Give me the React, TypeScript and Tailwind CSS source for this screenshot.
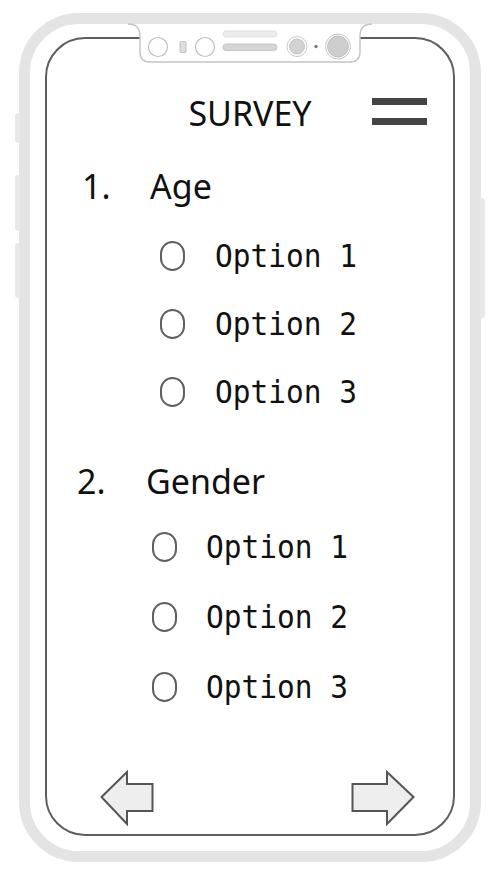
import React from 'react';

const ageOptions = ['Option 1', 'Option 2', 'Option 3'];
const genderOptions = ['Option 1', 'Option 2', 'Option 3'];

function Radio() {
  return <span className="block w-[25px] h-[30px] rounded-full border-2 border-[#606060] bg-white shrink-0" />;
}

function Notch() {
  return (
    <svg className="absolute left-[125px] top-[13px]" width="250" height="55" viewBox="0 0 250 55">
      <path
        d="M3 11 C11 11 15 15 15 23 L15 39 Q15 49 25 49 L225 49 Q235 49 235 39 L235 23 C235 15 239 11 247 11"
        fill="#fff"
        stroke="#c4c4c4"
        strokeWidth="1.4"
      />
      <rect x="98" y="18" width="54" height="6" rx="3" fill="#ececec" stroke="#dcdcdc" strokeWidth="0.8" />
      <circle cx="33" cy="34" r="9.5" fill="#fff" stroke="#c0c0c0" strokeWidth="1.2" />
      <rect x="55" y="28.5" width="6" height="11" rx="1" fill="#dedede" stroke="#b5b5b5" strokeWidth="0.8" />
      <circle cx="80" cy="34" r="9.5" fill="#fff" stroke="#c0c0c0" strokeWidth="1.2" />
      <rect x="98" y="31" width="54" height="6.5" rx="3.2" fill="#d6d6d6" stroke="#bdbdbd" strokeWidth="0.8" />
      <circle cx="172" cy="33.5" r="10" fill="#fff" stroke="#c9c9c9" strokeWidth="1" />
      <circle cx="172" cy="33.5" r="7.5" fill="#d2d2d2" stroke="#b8b8b8" strokeWidth="0.8" />
      <circle cx="191" cy="33.5" r="1.7" fill="#7a7a7a" />
      <circle cx="213" cy="33.5" r="12.5" fill="#fff" stroke="#c4c4c4" strokeWidth="1" />
      <circle cx="213" cy="33.5" r="10.5" fill="#cdcdcd" stroke="#b5b5b5" strokeWidth="0.8" />
    </svg>
  );
}

export default function App() {
  return (
    <div className="relative w-[500px] h-[878px] bg-white overflow-hidden text-[#111]">
      {/* side buttons */}
      <span className="absolute left-[15px] top-[113px] w-[5px] h-[30px] rounded-l-[3px] bg-[#e8e8e8]" />
      <span className="absolute left-[15px] top-[175px] w-[5px] h-[56px] rounded-l-[3px] bg-[#e8e8e8]" />
      <span className="absolute left-[15px] top-[243px] w-[5px] h-[55px] rounded-l-[3px] bg-[#e8e8e8]" />
      <span className="absolute left-[480px] top-[198px] w-[5px] h-[120px] rounded-r-[3px] bg-[#e8e8e8]" />

      {/* phone body */}
      <div className="ml-[19px] mt-[13px] w-[462px] h-[849px] rounded-[60px] border-[11px] border-[#e4e4e4] px-[15px] pt-[13px] pb-[15px]">
        {/* screen */}
        <div className="flex flex-col h-full rounded-[40px] border-2 border-[#5e5e5e]">
          <header className="mt-[54px] h-[40px] grid grid-cols-[1fr_auto_1fr] items-center">
            <span />
            <h1 className="text-[34px] leading-[40px] font-['Noto_Sans',sans-serif]">SURVEY</h1>
            <div className="justify-self-end mr-[26px] mb-[4px] flex flex-col gap-[13px]">
              <span className="block w-[55px] h-[7px] bg-[#444]" />
              <span className="block w-[55px] h-[7px] bg-[#444]" />
            </div>
          </header>

          {/* question 1 */}
          <section className="mt-[33px]">
            <div className="flex items-center h-[40px] ml-[35px] text-[34px] leading-[40px] font-['Noto_Sans',sans-serif]">
              <span className="w-[68px]">1.</span>
              <span>Age</span>
            </div>
            <ul className="mt-[16px]">
              {ageOptions.map((o) => (
                <li key={o} className="flex items-center h-[68px] ml-[113px] gap-[30px]">
                  <Radio />
                  <span className="inline-block scale-y-[1.1] text-[29.5px] font-['DejaVu_Sans_Mono',monospace]">{o}</span>
                </li>
              ))}
            </ul>
          </section>

          {/* question 2 */}
          <section className="mt-[35px]">
            <div className="flex items-center h-[40px] ml-[30px] text-[34px] leading-[40px] font-['Noto_Sans',sans-serif]">
              <span className="w-[69px]">2.</span>
              <span>Gender</span>
            </div>
            <ul className="mt-[11px]">
              {genderOptions.map((o) => (
                <li key={o} className="flex items-center h-[70px] ml-[105px] gap-[29px]">
                  <Radio />
                  <span className="inline-block scale-y-[1.1] text-[29.5px] font-['DejaVu_Sans_Mono',monospace]">{o}</span>
                </li>
              ))}
            </ul>
          </section>

          {/* nav arrows */}
          <div className="mt-auto flex justify-between items-end pl-[53px] pr-[38px] pb-[8px]">
            <svg width="54" height="56" viewBox="0 0 54 56">
              <polygon points="1.5,27 27,2 27,14 52.5,14 52.5,41 27,41 27,54" fill="#eeeeee" stroke="#555" strokeWidth="2" strokeLinejoin="miter" />
            </svg>
            <svg width="64" height="56" viewBox="0 0 64 56">
              <polygon points="62.5,27 36,2 36,14 1.5,14 1.5,41 36,41 36,54" fill="#eeeeee" stroke="#555" strokeWidth="2" strokeLinejoin="miter" />
            </svg>
          </div>
        </div>
      </div>

      <Notch />
    </div>
  );
}
